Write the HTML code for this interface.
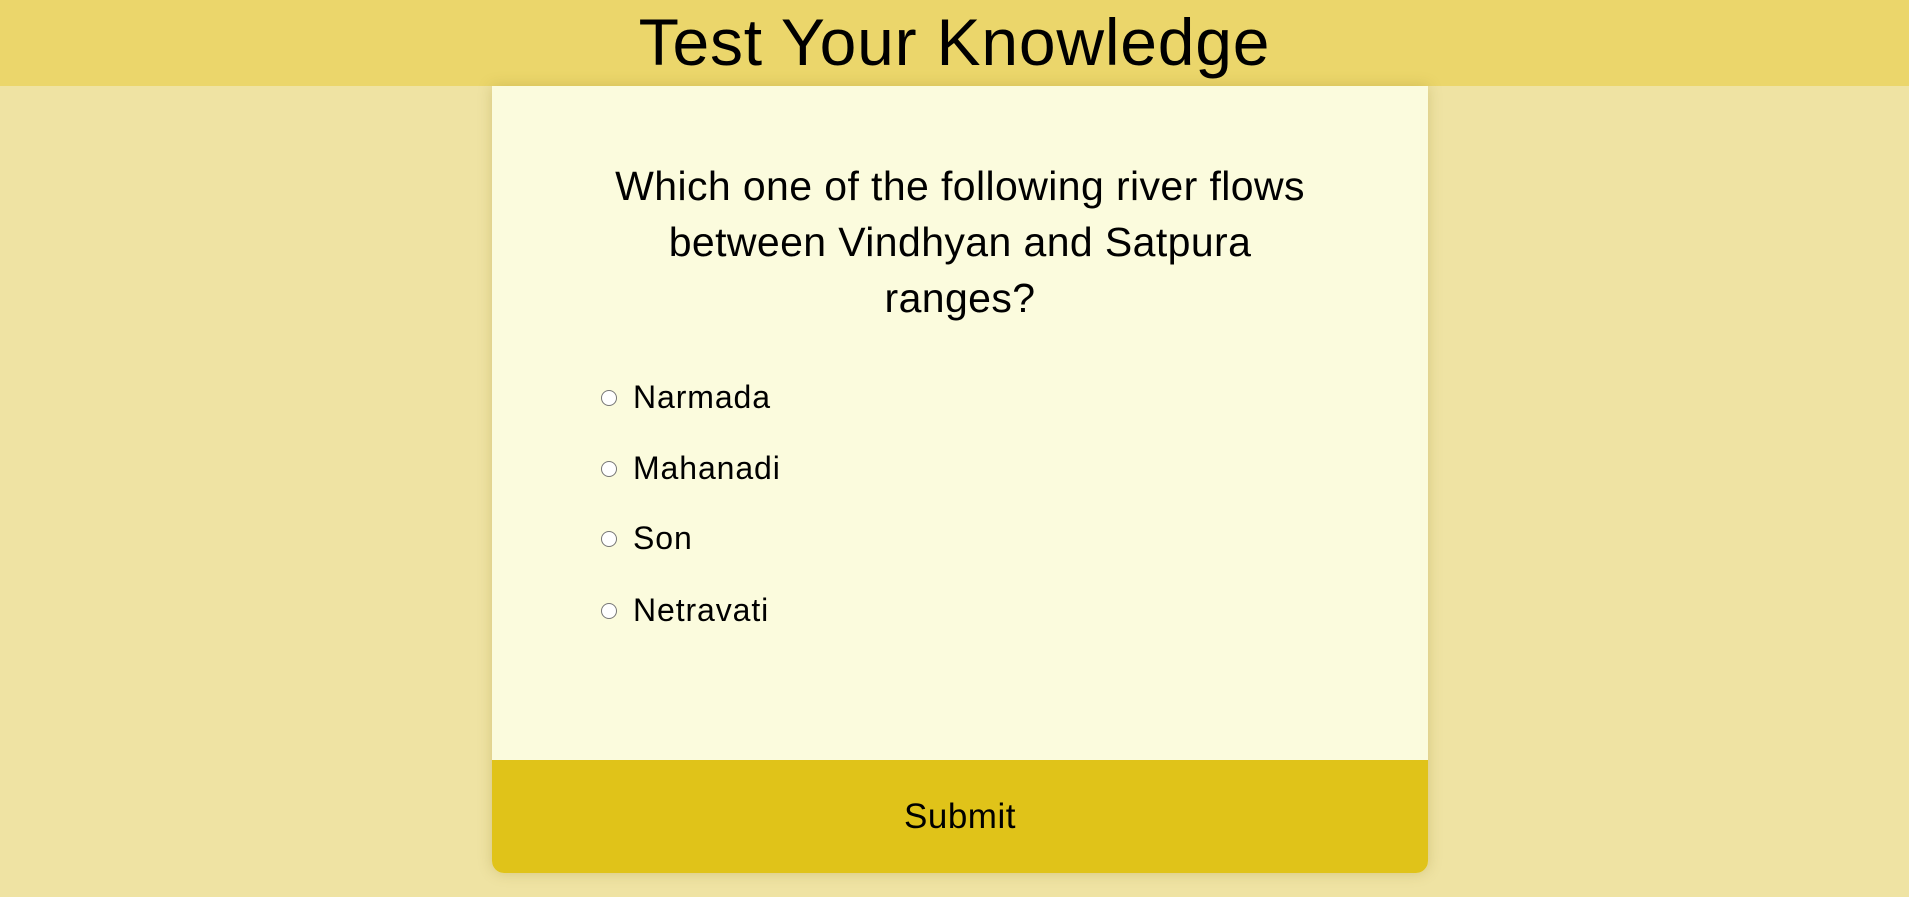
<!DOCTYPE html>
<html><head><meta charset="utf-8"><style>
html,body{margin:0;padding:0;width:1909px;height:897px;overflow:hidden;background:#efe3a3;font-family:"Liberation Sans",sans-serif;color:#000}
.hdr{position:absolute;left:0;top:0;width:1909px;height:86px;background:#ebd66b;text-align:center}
.hdr h1{margin:0;font-weight:400;font-size:66px;line-height:84px;letter-spacing:0.8px}
.card{position:absolute;left:492px;top:86px;width:936px;height:787px;background:#fbfbdd;border-radius:0 0 12px 12px;box-shadow:0 0 14px rgba(150,130,40,.3);overflow:hidden}
.q{position:absolute;left:0;top:72px;width:936px;text-align:center;font-size:41px;line-height:56px;letter-spacing:0.4px}
.q div{width:720px;margin:0 auto}
.opt{position:absolute;left:109px;font-size:32px;display:flex;align-items:center;letter-spacing:0.9px}
.opt span.r{width:16px;height:16px;border:1.5px solid #767676;border-radius:50%;background:#fff;margin-right:16px;box-sizing:border-box}
.sub{position:absolute;left:0;top:674px;width:936px;height:113px;background:#e0c319;text-align:center;line-height:113px;font-size:35px;letter-spacing:0.5px}
</style></head><body>
<div class="hdr"><h1>Test Your Knowledge</h1></div>
<div class="card">
<div class="q"><div>Which one of the following river flows between Vindhyan and Satpura ranges?</div></div>
<div class="opt" style="top:293px"><span class="r"></span>Narmada</div>
<div class="opt" style="top:364px"><span class="r"></span>Mahanadi</div>
<div class="opt" style="top:434px"><span class="r"></span>Son</div>
<div class="opt" style="top:506px"><span class="r"></span>Netravati</div>
<div class="sub">Submit</div>
</div>
</body></html>
